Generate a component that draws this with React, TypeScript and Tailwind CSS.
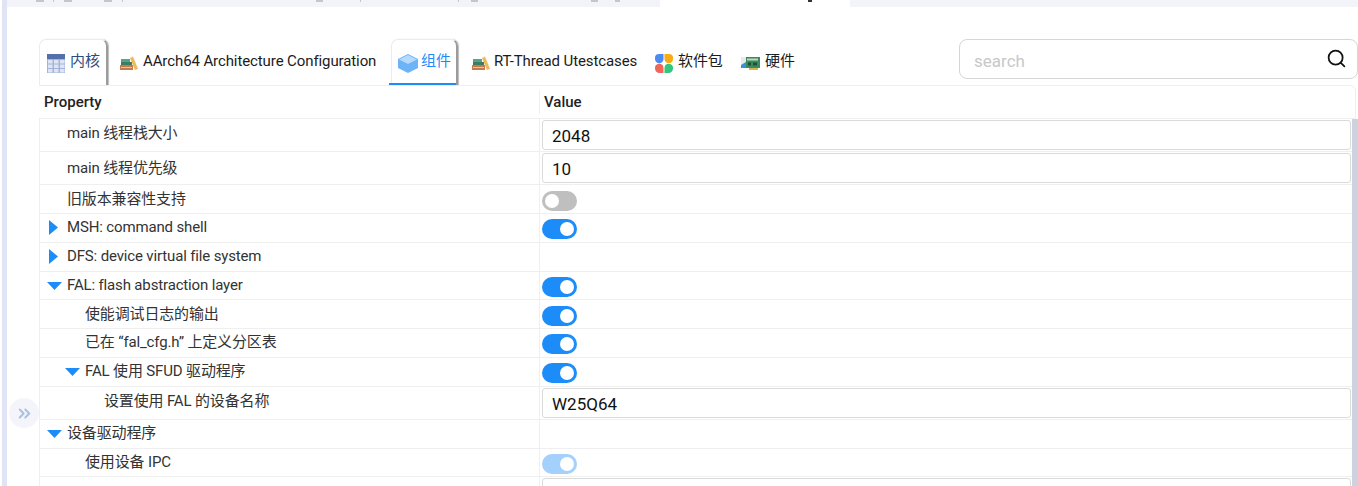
import { ChevronsRight, Search } from 'lucide-react'

const sans = 'font-["Roboto","Noto_Sans_CJK_SC",sans-serif]'

function TableIcon() {
  return (
    <svg width="18" height="19" viewBox="0 0 18 19" className="shrink-0">
      <rect width="18" height="19" fill="#a3b4d8" />
      <rect width="18" height="5" fill="#5470ac" />
      {[6, 10.5, 15].map(y =>
        [1, 7, 13].map(x => <rect key={`${x}-${y}`} x={x} y={y} width="4.5" height="3.5" fill="#dfe5f3" />)
      )}
    </svg>
  )
}

function BooksIcon() {
  return (
    <svg width="18" height="14" viewBox="0 0 18 14" className="shrink-0">
      <path d="M10 2 L13 0.5 L18 13 L15 14 Z" fill="#f0b95c" />
      <rect x="1" y="3" width="9" height="3" fill="#4fa39a" />
      <rect x="1" y="6" width="11" height="3" fill="#3e7d5c" />
      <rect x="0" y="9" width="13" height="5" fill="#c57b4d" />
      <rect x="1" y="11" width="11" height="1" fill="#eac3a2" />
    </svg>
  )
}

function CubeIcon() {
  return (
    <svg width="20" height="19" viewBox="0 0 20 19" className="shrink-0">
      <path d="M10 0 L20 5 V14 L10 19 L0 14 V5 Z" fill="#6db3f7" />
      <path d="M10 1 L19 5.5 L10 10 L1 5.5 Z" fill="#b5dafc" />
    </svg>
  )
}

function PetalsIcon() {
  return (
    <svg width="18" height="19" viewBox="0 0 18 19" className="shrink-0">
      <path d="M4 0 H8.5 V5 A4 4 0 0 1 0 5 V4 A4 4 0 0 1 4 0 Z" fill="#4b8bf4" />
      <path d="M9.5 0 H14 A4 4 0 0 1 18 4 V5 A4 4 0 0 1 9.5 5 Z" fill="#f8ab15" />
      <path d="M4 9.8 A4.5 4.5 0 0 1 8.5 14 V19 H4.5 A4.5 4.5 0 0 1 0 14.5 A4.5 4.5 0 0 1 4 9.8 Z" fill="#f2655a" />
      <path d="M14 9.8 A4.5 4.5 0 0 1 18 14.5 A4.5 4.5 0 0 1 13.5 19 H9.5 V14 A4.5 4.5 0 0 1 14 9.8 Z" fill="#34c77b" />
    </svg>
  )
}

function CardIcon() {
  return (
    <svg width="19" height="15" viewBox="0 0 19 15" className="shrink-0">
      <rect x="0" y="1" width="19" height="11" fill="#3b8a5e" />
      <rect x="0" y="1" width="5" height="8" fill="#e4ece8" />
      <path d="M0 9 L5 6 V12 H0 Z" fill="#3b8fd9" />
      <rect x="6" y="2.5" width="11" height="2" fill="#b7dab8" />
      <rect x="7" y="6.5" width="3" height="3" fill="#1f5038" />
      <rect x="12" y="6.5" width="4" height="3" fill="#1f5038" />
      <rect x="8" y="12" width="9" height="2" fill="#d6b64a" />
    </svg>
  )
}

function Tab({ icon, label, boxed, active, className }: { icon: React.ReactNode; label: string; boxed?: boolean; active?: boolean; className: string }) {
  return (
    <div
      className={`relative flex h-[46px] items-center pb-[2px] text-[15px] tracking-[-0.1px] [&>svg]:mt-[4px] ${className} ${
        boxed ? 'rounded-t-[7px] border-t border-l border-[#ececec] border-r-2 border-r-[#9b9b9b] shadow-[1px_0_1px_#bdbdbd]' : ''
      } ${active ? 'text-[#1c8cf9]' : boxed ? 'text-[#2a4d7f]' : 'text-[#1b1b1b]'}`}
    >
      {icon}
      <span className="whitespace-nowrap">{label}</span>
      {active && <div className="absolute -left-[3px] bottom-0 h-[2px] w-[67px] bg-[#1c8cf9]" />}
    </div>
  )
}

function Toggle({ on, dim, low }: { on?: boolean; dim?: boolean; low?: boolean }) {
  const bg = dim ? 'bg-[#a3d0fc]' : on ? 'bg-[#1c8cf9]' : 'bg-[#bfbfbf]'
  return (
    <div className={`flex h-5 w-[35px] items-center rounded-full px-[3px] ${low ? 'mt-[6px]' : 'mt-[5px]'} ${bg} ${on ? 'justify-end' : 'justify-start'}`}>
      <div className="h-[14px] w-[14px] rounded-full bg-white" />
    </div>
  )
}

function Field({ value }: { value?: string }) {
  return (
    <div className="mt-px flex h-[30px] w-[809px] items-center rounded-[3px] border border-[#dadada] bg-white pt-[3px] pl-[9px] text-[17px] text-[#111]">
      {value}
    </div>
  )
}

function Arrow({ open }: { open?: boolean }) {
  if (open) {
    return (
      <svg width="15" height="8" viewBox="0 0 15 8" className="absolute top-[8px] -left-[20px]">
        <path d="M0 0 H15 L7.5 8 Z" fill="#1c8cf9" />
      </svg>
    )
  }
  return (
    <svg width="9" height="15" viewBox="0 0 9 15" className="absolute top-[4px] -left-[18px]">
      <path d="M0 0 L9 7.5 L0 15 Z" fill="#1c8cf9" />
    </svg>
  )
}

type RowData = {
  label: string
  cell: string
  height: string
  arrow?: 'open' | 'closed'
  value?: React.ReactNode
}

const rows: RowData[] = [
  { label: 'main 线程栈大小', cell: 'pl-[27px] pt-[3px]', height: 'h-[33px]', value: <Field value="2048" /> },
  { label: 'main 线程优先级', cell: 'pl-[27px] pt-[5px]', height: 'h-[33px]', value: <Field value="10" /> },
  { label: '旧版本兼容性支持', cell: 'pl-[27px] pt-[3px]', height: 'h-[29px]', value: <Toggle low /> },
  { label: 'MSH: command shell', cell: 'pl-[27px] pt-[2px]', height: 'h-[29px]', arrow: 'closed', value: <Toggle on /> },
  { label: 'DFS: device virtual file system', cell: 'pl-[27px] pt-[2px]', height: 'h-[29px]', arrow: 'closed' },
  { label: 'FAL: flash abstraction layer', cell: 'pl-[27px] pt-[2px]', height: 'h-[28px]', arrow: 'open', value: <Toggle on /> },
  { label: '使能调试日志的输出', cell: 'pl-[45px] pt-[3px]', height: 'h-[29px]', value: <Toggle on low /> },
  { label: '已在 “fal_cfg.h” 上定义分区表', cell: 'pl-[45px] pt-[2px]', height: 'h-[29px]', value: <Toggle on /> },
  { label: 'FAL 使用 SFUD 驱动程序', cell: 'pl-[45px] pt-[2px]', height: 'h-[29px]', arrow: 'open', value: <Toggle on /> },
  { label: '设置使用 FAL 的设备名称', cell: 'pl-[64px] pt-[3px]', height: 'h-[33px]', value: <Field value="W25Q64" /> },
  { label: '设备驱动程序', cell: 'pl-[27px] pt-[2px]', height: 'h-[29px]', arrow: 'open' },
  { label: '使用设备 IPC', cell: 'pl-[45px] pt-[2px]', height: 'h-[28px]', value: <Toggle on dim /> },
  { label: '', cell: 'pl-[45px]', height: 'h-[33px]', value: <Field /> },
]

function Mark({ className }: { className: string }) {
  return <div className={`h-[2px] shrink-0 ${className}`} />
}

export default function App() {
  return (
    <div className={`relative flex h-[486px] w-[1358px] overflow-hidden bg-white pl-[2px] ${sans}`}>
      <div className="w-[5px] shrink-0 bg-[#e0e4f5]" />
      <div className="flex min-w-0 flex-1 flex-col">
        {/* bottom edge of the file tabs, their text is cut off by the window */}
        <div className="flex h-[7px] shrink-0 bg-[#f3f4fa]">
          <Mark className="ml-[29px] w-[8px] bg-[#c6c6ca]" />
          <Mark className="ml-[9px] w-px bg-[#c6c6ca]" />
          <Mark className="ml-[10px] w-[8px] bg-[#c6c6ca]" />
          <Mark className="ml-[32px] w-[8px] bg-[#c6c6ca]" />
          <Mark className="ml-[10px] w-px bg-[#c6c6ca]" />
          <Mark className="ml-[193px] w-[7px] bg-[#c6c6ca]" />
          <Mark className="ml-[37px] w-px bg-[#c6c6ca]" />
          <Mark className="ml-[97px] w-px bg-[#c6c6ca]" />
          <Mark className="ml-[12px] w-[7px] bg-[#c6c6ca]" />
          <Mark className="ml-[113px] w-[7px] bg-[#c6c6ca]" />
          <Mark className="ml-[17px] w-[5px] bg-[#c6c6ca]" />
          <div className="ml-[40px] flex h-full w-[190px] shrink-0 bg-white pl-[148px]">
            <Mark className="w-[4px] bg-[#333]" />
          </div>
        </div>

        <div className="flex min-h-0 flex-1 flex-col pl-[32px]">
          <div className="mt-[32px] flex h-[46px] shrink-0">
            <Tab boxed icon={<TableIcon />} label="内核" className="w-[69px] gap-[5px] pl-[7px]" />
            <Tab icon={<BooksIcon />} label="AArch64 Architecture Configuration" className="w-[283px] gap-[5px] pl-[12px]" />
            <Tab boxed active icon={<CubeIcon />} label="组件" className="w-[67px] gap-[3px] pl-[6px]" />
            <Tab icon={<BooksIcon />} label="RT-Thread Utestcases" className="w-[196px] gap-[4px] pl-[14px]" />
            <Tab icon={<PetalsIcon />} label="软件包" className="w-[86px] gap-[5px] pl-px" />
            <Tab icon={<CardIcon />} label="硬件" className="w-[60px] gap-[5px] pl-px" />
            <div className="ml-[159px] flex h-[40px] w-[399px] shrink-0 items-center justify-between rounded-[8px] border border-[#d6d6d6] pr-[10px] pl-[14px]">
              <span className="pt-[5px] text-[17px] text-[#c8c8c8]">search</span>
              <Search size={21} strokeWidth={2} className="-mt-[2px] text-[#111]" />
            </div>
          </div>

          <div className="mr-[2px] flex h-[34px] shrink-0 items-center rounded-tr-[6px] border-y border-r border-[#efefef] text-[15px] font-medium text-[#222]">
            <div className="w-[500px] pl-[5px]">Property</div>
            <div className="flex h-[24px] items-center border-l border-[#efefef] pl-[4px]">Value</div>
          </div>

          <div className="flex min-h-0 flex-1 overflow-hidden">
            <div className="min-w-0 flex-1">
              {rows.map((row, i) => (
                <div key={i} className={`flex shrink-0 border-b border-l border-[#efefef] ${row.height}`}>
                  <div className={`w-[499px] shrink-0 ${row.cell} text-[15px] leading-[22px] tracking-[-0.15px] text-[#333]`}>
                    <div className="relative">
                      {row.arrow && <Arrow open={row.arrow === 'open'} />}
                      {row.label}
                    </div>
                  </div>
                  <div className="flex-1 border-l border-[#efefef] pl-[2px]">{row.value}</div>
                </div>
              ))}
            </div>
            <div className="-mt-px w-[6px] shrink-0 bg-[#ccd3de]" />
          </div>
        </div>
      </div>

      <div className="absolute top-[398px] left-[9px] flex h-[30px] w-[30px] items-center justify-center rounded-full bg-[#f3f5fa] text-[#a9c0e0]">
        <ChevronsRight size={19} strokeWidth={2.5} />
      </div>
    </div>
  )
}
